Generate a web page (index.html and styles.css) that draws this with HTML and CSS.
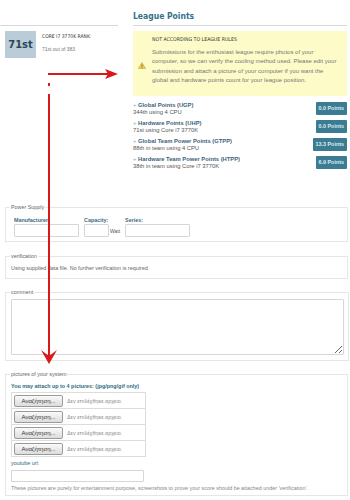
FILE: index.html
```html
<!DOCTYPE html>
<html lang="en">
<head>
    <meta charset="UTF-8">
    <meta name="viewport" content="width=device-width, initial-scale=1.0">
    <title>Edit submission</title>
    <link rel="stylesheet" href="styles.css">
</head>
<body>

    <div class="page">
        <!-- Phần trên: rank + league points -->
        <div class="top">
            <div class="rank-col">
                <div class="rank-row">
                    <div class="rank-box">71st</div>
                    <div class="rank-info">
                        <div class="rank-title">CORE I7 3770K RANK:</div>
                        <div class="rank-sub">71st out of 383</div>
                    </div>
                </div>
            </div>

            <div class="league-col">
                <h2 class="league-title">League Points</h2>

                <div class="warning">
                    <svg class="warn-icon" width="8" height="7" viewBox="0 0 8 7">
                        <polygon points="4,0.5 7.6,6.6 0.4,6.6" fill="#f3d34a" stroke="#b9a24a" stroke-width="0.6"/>
                        <rect x="3.6" y="2.4" width="0.8" height="2.3" fill="#6b5a1a"/>
                        <rect x="3.6" y="5.2" width="0.8" height="0.8" fill="#6b5a1a"/>
                    </svg>
                    <div class="warn-title">NOT ACCORDING TO LEAGUE RULES</div>
                    <p class="warn-text">Submissions for the enthusiast league require photos of your computer, so we can verify the cooling method used. Please edit your submission and attach a picture of your computer if you want the global and hardware points count for your league position.</p>
                </div>

                <div class="points">
                    <div class="point-row">
                        <div>
                            <div class="point-name"><span class="plus">+</span> Global Points (UGP)</div>
                            <div class="point-sub">344th using 4 CPU</div>
                        </div>
                        <span class="badge">0.0 Points</span>
                    </div>
                    <div class="point-row">
                        <div>
                            <div class="point-name"><span class="plus">+</span> Hardware Points (UHP)</div>
                            <div class="point-sub">71st using Core i7 3770K</div>
                        </div>
                        <span class="badge">0.0 Points</span>
                    </div>
                    <div class="point-row">
                        <div>
                            <div class="point-name"><span class="plus">+</span> Global Team Power Points (GTPP)</div>
                            <div class="point-sub">88th in team using 4 CPU</div>
                        </div>
                        <span class="badge">13.3 Points</span>
                    </div>
                    <div class="point-row">
                        <div>
                            <div class="point-name"><span class="plus">+</span> Hardware Team Power Points (HTPP)</div>
                            <div class="point-sub">38th in team using Core i7 3770K</div>
                        </div>
                        <span class="badge">6.9 Points</span>
                    </div>
                </div>
            </div>
        </div>

        <!-- Power supply -->
        <fieldset class="box psu">
            <legend>Power Supply</legend>
            <div class="psu-fields">
                <div class="field">
                    <label>Manufacturer:</label>
                    <input type="text" class="in-manu">
                </div>
                <div class="field">
                    <label>Capacity:</label>
                    <div class="watt-line">
                        <input type="text" class="in-cap">
                        <span class="watt">Watt</span>
                    </div>
                </div>
                <div class="field">
                    <label>Series:</label>
                    <input type="text" class="in-series">
                </div>
            </div>
        </fieldset>

        <fieldset class="box verify">
            <legend>verification</legend>
            <p class="plain">Using supplied data file. No further verification is required.</p>
        </fieldset>

        <fieldset class="box comment">
            <legend>comment</legend>
            <textarea></textarea>
        </fieldset>

        <fieldset class="box pics">
            <legend>pictures of your system</legend>
            <div class="pics-note">You may attach up to 4 pictures: (jpg/png/gif only)</div>
            <div class="files">
                <div class="file-row"><button class="file-btn">Αναζήτηση...</button><span>Δεν επιλέχθηκε αρχείο.</span></div>
                <div class="file-row"><button class="file-btn">Αναζήτηση...</button><span>Δεν επιλέχθηκε αρχείο.</span></div>
                <div class="file-row"><button class="file-btn">Αναζήτηση...</button><span>Δεν επιλέχθηκε αρχείο.</span></div>
                <div class="file-row"><button class="file-btn">Αναζήτηση...</button><span>Δεν επιλέχθηκε αρχείο.</span></div>
            </div>
            <div class="pics-note yt">youtube url:</div>
            <input type="text" class="in-yt">
            <p class="plain foot">These pictures are purely for entertainment purpose, screenshots to prove your score should be attached under 'verification'.</p>
        </fieldset>

        <!-- Mũi tên đỏ vẽ đè lên trang -->
        <svg class="arrows" width="350" height="500" viewBox="0 0 350 500">
            <line x1="48" y1="74" x2="108" y2="74" stroke="#d8191b" stroke-width="2"/>
            <polygon points="105,69 118,74 105,79 108,74" fill="#d8191b"/>
            <rect x="48" y="83" width="2" height="3" fill="#d8191b"/>
            <line x1="49" y1="94" x2="49" y2="358" stroke="#d8191b" stroke-width="2"/>
            <polygon points="41,350 49,364 57,350 49,356" fill="#d8191b"/>
        </svg>
    </div>

</body>
</html>
```

FILE: styles.css
```css
body {
    margin: 0;
    font-family: "Liberation Sans", Arial, sans-serif;
    background-color: #fff;
    color: #555;
}

.page {
    position: relative;
    width: 350px;
    height: 500px;
    overflow: hidden;
}

/* Phần trên */
.top {
    display: flex;
    height: 203px;
}

.rank-col {
    width: 118px;
    margin-top: 25px;
    border-top: 1px solid #d8d8d8;
}

.rank-row {
    display: flex;
    margin-top: 5px;
    padding-left: 5px;
}

.rank-box {
    width: 31px;
    height: 27px;
    background-color: #b9ccd8;
    color: #2c4659;
    font-family: "DejaVu Sans Condensed", "DejaVu Sans", sans-serif;
    font-weight: bold;
    font-size: 11px;
    line-height: 27px;
    text-align: center;
}

.rank-info {
    margin-left: 6px;
    padding-top: 1px;
}

.rank-title {
    font-family: "DejaVu Sans Condensed", sans-serif;
    font-size: 5px;
    color: #333;
    line-height: 8px;
}

.rank-sub {
    font-size: 5px;
    color: #777;
    margin-top: 6px;
}

.league-col {
    margin-left: 15px;
    width: 214px;
}

.league-title {
    margin: 0;
    padding-top: 10px;
    height: 15px;
    font-family: "DejaVu Sans Condensed", sans-serif;
    font-size: 8.5px;
    line-height: 12px;
    color: #35708a;
    border-bottom: 1px solid #d8d8d8;
}

.warning {
    position: relative;
    margin-top: 5px;
    height: 65px;
    box-sizing: border-box;
    padding: 4px 6px 0 19px;
    background-color: #fdfcc8;
}

.warn-icon {
    position: absolute;
    left: 5px;
    top: 31px;
}

.warn-title {
    font-family: "DejaVu Sans Condensed", sans-serif;
    font-size: 5.2px;
    color: #333;
    line-height: 8px;
}

.warn-text {
    margin: 5px 0 0;
    font-size: 6px;
    line-height: 9.3px;
    color: #777;
}

.points {
    margin-top: 3px;
}

.point-row {
    display: flex;
    justify-content: space-between;
    align-items: center;
    height: 18px;
}

.point-name {
    font-size: 5.8px;
    line-height: 8px;
    color: #3d5f78;
    font-weight: bold;
}

.plus {
    color: #9ab;
    font-weight: normal;
}

.point-sub {
    font-size: 5.8px;
    line-height: 7px;
    color: #555;
}

.badge {
    background-color: #3c7c93;
    color: #dcecf2;
    font-size: 5.4px;
    font-weight: bold;
    padding: 0 3px;
    height: 13px;
    line-height: 13px;
    border-radius: 1px;
}

/* Các fieldset */
.box {
    margin: 0 2px 0 5px;
    padding: 0 4px 4px;
    border: 1px solid #e6e6e6;
}

.box legend {
    padding: 0 1px;
    font-size: 5.4px;
    line-height: 8px;
    color: #666;
}

.psu-fields {
    display: flex;
    padding-left: 4px;
    gap: 5px;
    margin-top: 6px;
}

.field label {
    display: block;
    font-size: 5.4px;
    line-height: 7px;
    color: #3b6b87;
    font-weight: bold;
}

input,
textarea {
    box-sizing: border-box;
    border: 1px solid #d6d6d6;
    border-radius: 1px;
    background-color: #fff;
    margin: 0;
    padding: 0;
    display: block;
}

.field input {
    height: 13px;
}

.in-manu {
    width: 65px;
}

.in-cap {
    width: 25px;
}

.in-series {
    width: 65px;
}

.watt-line {
    display: flex;
    align-items: center;
    gap: 1px;
}

.watt {
    font-size: 5px;
    color: #555;
}

.verify {
    margin-top: 10px;
}

.plain {
    margin: 4px 0 2px 1px;
    font-size: 5.4px;
    line-height: 8px;
    color: #666;
}

.comment {
    margin-top: 9px;
    padding-bottom: 5px;
}

.comment textarea {
    width: 333px;
    height: 56px;
    margin-top: 3px;
    margin-left: 1px;
    resize: vertical;
}

.pics {
    margin-top: 9px;
    height: 126px;
    box-sizing: border-box;
}

.pics-note {
    margin: 4px 0 2px 1px;
    font-size: 5.4px;
    line-height: 8px;
    color: #2e6b7c;
    font-weight: bold;
}

.files {
    width: 133px;
    margin-left: 1px;
    border: 1px solid #dcdcdc;
}

.file-row {
    display: flex;
    align-items: center;
    height: 15px;
    padding-left: 2px;
    border-top: 1px solid #dcdcdc;
    font-size: 5.4px;
    color: #888;
}

.file-row:first-child {
    border-top: none;
}

.file-btn {
    width: 49px;
    height: 12px;
    padding: 0;
    margin-right: 4px;
    font-family: "Liberation Sans", Arial, sans-serif;
    font-size: 6px;
    color: #333;
    background: linear-gradient(#fafafa, #dcdcdc);
    border: 1px solid #9a9a9a;
    border-radius: 2px;
}

.yt {
    margin-top: 2px;
    margin-bottom: 3px;
    font-weight: normal;
}

.in-yt {
    width: 133px;
    height: 12px;
    margin-left: 1px;
}

.foot {
    margin-top: 2px;
    color: #888;
}

/* Mũi tên đỏ đè lên nội dung */
.arrows {
    position: absolute;
    left: 0;
    top: 0;
    pointer-events: none;
}
```
